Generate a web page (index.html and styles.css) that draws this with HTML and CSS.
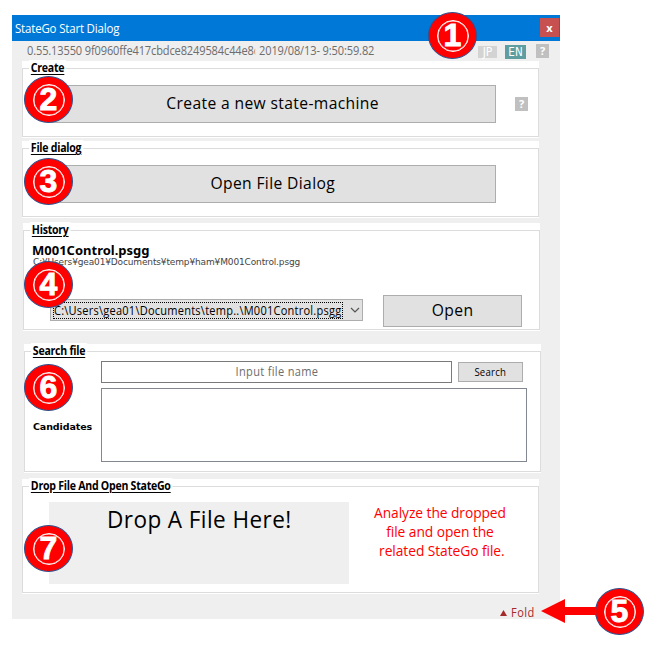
FILE: index.html
```
<!DOCTYPE html>
<html lang="en">
<head>
<meta charset="utf-8">
<title>StateGo Start Dialog</title>
<link rel="stylesheet" href="styles.css">
</head>
<body>
<main class="window">
  <header class="titlebar"><h1 class="title narrow-left">StateGo Start Dialog</h1><button class="close">x</button></header>
  <div class="meta">
    <span class="version narrow-left">0.55.13550 9f0960ffe417cbdce8249584c44e8c</span>
    <span class="date narrow-left">2019/08/13- 9:50:59.82</span>
    <span class="lang jp">JP</span><span class="lang en">EN</span><span class="help">?</span>
  </div>
  <section class="panel create">
    <div class="frame"><h2 class="legend narrow-left">Create</h2>
      <div class="row"><button class="btn big"><span class="narrow">Create a new state-machine</span></button><span class="help">?</span></div>
    </div>
  </section>
  <section class="panel file">
    <div class="frame"><h2 class="legend narrow-left">File dialog</h2>
      <div class="row"><button class="btn big"><span class="narrow">Open File Dialog</span></button></div>
    </div>
  </section>
  <section class="panel history">
    <div class="frame"><h2 class="legend narrow-left">History</h2>
      <div class="recent">M001Control.psgg</div>
      <div class="path">C:¥Users¥gea01¥Documents¥temp¥ham¥M001Control.psgg</div>
      <div class="pick">
        <div class="combo"><div class="combo-text"><span class="narrow-left">C:\Users\gea01\Documents\temp..\M001Control.psgg</span></div>
          <svg class="chevron" width="10" height="6" viewBox="0 0 10 6"><path d="M1 1l4 4 4-4" fill="none" stroke="#555" stroke-width="1.2"/></svg></div>
        <button class="btn open"><span class="narrow">Open</span></button>
      </div>
    </div>
  </section>
  <section class="panel search">
    <div class="frame"><h2 class="legend narrow-left">Search file</h2>
      <div class="search-row"><div class="input"><span class="narrow">Input file name</span></div><button class="btn find"><span class="narrow">Search</span></button></div>
      <div class="list-row"><span class="cand">Candidates</span><div class="list"></div></div>
    </div>
  </section>
  <section class="panel drop">
    <div class="frame"><h2 class="legend narrow-left">Drop File And Open StateGo</h2>
      <div class="drop-row"><div class="dropzone"><span class="narrow">Drop A File Here!</span></div>
        <p class="note narrow">Analyze the dropped<br>file and open the<br><span class="last">related StateGo file.</span></p></div>
    </div>
  </section>
  <footer class="fold"><svg width="7" height="6" viewBox="0 0 7 6"><path d="M3.5 0L7 6H0z" fill="#a52a2a"/></svg><span class="narrow-left">Fold</span></footer>
</main>
<svg class="arrow" width="58" height="24" viewBox="0 0 58 24"><path d="M0 12L24 0V8H58V16H24V24z" fill="#f00"/></svg>
<div class="badge b1"><span class="ring">1</span></div>
<div class="badge b2"><span class="ring">2</span></div>
<div class="badge b3"><span class="ring">3</span></div>
<div class="badge b4"><span class="ring">4</span></div>
<div class="badge b5"><span class="ring">5</span></div>
<div class="badge b6"><span class="ring">6</span></div>
<div class="badge b7"><span class="ring">7</span></div>
</body>
</html>
```
FILE: styles.css
```
* { box-sizing: border-box; }
body { margin: 0; padding: 15px 0 0 12px; height: 647px; overflow: hidden; position: relative; background: #fff; color: #000; font-family: "Open Sans", sans-serif; }
h1, h2, p { margin: 0; font-weight: normal; }
button { padding: 0; font-family: inherit; border: 0; border-radius: 0; color: #000; }
.narrow, .narrow-left { display: inline-block; transform: scaleX(.92); }
.narrow-left { transform-origin: 0 0; }
.window { width: 548px; height: 604px; background: #efefef; display: flex; flex-direction: column; }
.titlebar { height: 26px; flex: none; background: #0078d7; display: flex; justify-content: space-between; padding: 3px 1px 0 3px; }
.title { color: #fff; font-size: 12.5px; line-height: 21px; letter-spacing: -.2px; white-space: nowrap; }
.close { width: 19px; height: 19px; background: #c75050; color: #fff; font-size: 11px; line-height: 17px; font-weight: bold; }
.meta { height: 20px; flex: none; display: flex; padding-left: 15px; color: #6d6d6d; font-size: 12px; line-height: 19px; white-space: nowrap; }
.version { width: 248px; overflow: hidden; letter-spacing: -.14px; margin-right: -16px; }
.date { width: 219px; letter-spacing: -.13px; }
.lang { color: #fff; font-family: "DejaVu Sans Condensed", "DejaVu Sans", sans-serif; text-align: center; flex: none; }
.jp { width: 19px; height: 12px; margin-top: 5px; background: #d3d3d3; font-size: 12px; line-height: 12px; }
.en { width: 21px; height: 14px; margin: 4px 0 0 8px; background: #5f9ea0; font-size: 11.5px; line-height: 14px; }
.help { width: 13px; height: 14px; background: #c0c0c0; color: #fff; font-size: 11px; line-height: 14px; font-weight: bold; text-align: center; flex: none; }
.meta .help { margin: 3px 0 0 10px; }
.panel { flex: none; width: 517px; margin-left: 10px; background: #fff; padding: 7px 0 1px; }
.create { height: 77px; }
.file { height: 77px; margin-top: 3px; }
.history { height: 108px; margin: 5px 0 0 11px; }
.search { height: 129px; margin: 13px 0 0 12px; }
.drop { height: 115px; margin-top: 6px; }
.frame { height: 100%; border: 1px solid #dcdcdc; }
.legend { display: block; width: max-content; height: 16px; margin: -9px 0 0 6px; padding: 0 2px; background: #fff; font-size: 11.5px; line-height: 16px; font-weight: bold; letter-spacing: -.28px; text-decoration: underline; text-decoration-thickness: 1px; text-underline-offset: 2px; white-space: nowrap; }
.btn { border: 1px solid #adadad; background: #e1e1e1; }
.row { display: flex; align-items: center; padding: 9px 0 0 27px; }
.big { width: 446px; height: 38px; font-size: 17px; line-height: 22px; letter-spacing: .4px; padding-bottom: 2px; }
.row .help { margin-left: 19px; }
.recent { margin: 3px 0 0 8px; font: bold 13px/18px "Noto Sans", sans-serif; white-space: nowrap; }
.path { margin: -3px 0 0 9px; font: 9px/12px "DejaVu Sans", sans-serif; letter-spacing: -.14px; color: #444; white-space: nowrap; }
.pick { display: flex; align-items: center; padding: 27px 0 0 26px; }
.combo { width: 313px; height: 22px; margin-bottom: 2px; border: 1px solid #adadad; background: #e1e1e1; display: flex; align-items: center; padding-left: 2px; flex: none; }
.combo-text { width: 290px; flex: none; height: 17px; border: 1px dotted #000; font-size: 12px; line-height: 15px; letter-spacing: .25px; white-space: nowrap; }
.chevron { margin-left: 7px; flex: none; }
.open { width: 139px; height: 32px; margin-left: 20px; font-size: 17px; line-height: 22px; letter-spacing: .4px; padding-bottom: 2px; }
.search-row { display: flex; align-items: center; padding: 2px 0 0 76px; }
.input { width: 351px; height: 22px; border: 1px solid #7a7a7a; color: #6d6d6d; font-size: 12px; line-height: 20px; letter-spacing: .35px; text-align: center; }
.find { width: 65px; height: 20px; margin-left: 6px; font-size: 10.5px; line-height: 18px; letter-spacing: .2px; }
.list-row { display: flex; align-items: center; margin: 5px 0 0 8px; }
.cand { width: 68px; padding-top: 4px; font: bold 9.5px/12px "DejaVu Sans", sans-serif; letter-spacing: -.1px; white-space: nowrap; }
.list { width: 426px; height: 74px; border: 1px solid #828790; }
.drop-row { display: flex; padding: 8px 0 0 26px; }
.dropzone { width: 300px; height: 82px; background: #efefef; font-size: 24.5px; line-height: 34px; letter-spacing: .45px; text-align: center; }
.note { width: 182px; padding-top: 1px; color: #f00; font-size: 15px; line-height: 19px; letter-spacing: -.08px; text-align: center; white-space: nowrap; }
.last { padding-left: 4px; }
.fold { display: flex; align-items: center; gap: 4px; margin-left: 488px; padding-top: 10px; color: #a52a2a; font-size: 12px; line-height: 17px; letter-spacing: .5px; }
.badge { position: absolute; width: 49px; height: 47px; border: 1px solid #2f528f; border-radius: 50%; background: #f00; display: flex; align-items: center; justify-content: center; }
.ring { width: 32px; height: 32px; border: 1.5px solid #fff; border-radius: 50%; box-shadow: inset 0 0 0 .5px #fff; color: #fff; font: bold 32px/29px "Liberation Sans", sans-serif; -webkit-text-stroke: .9px #fff; text-align: center; }
.b1 { left: 428px; top: 12px; }
.b2 { left: 24px; top: 76px; }
.b3 { left: 24px; top: 158px; }
.b4 { left: 24px; top: 261px; }
.b5 { left: 595px; top: 588px; }
.b6 { left: 24px; top: 364px; }
.b7 { left: 24px; top: 525px; }
.arrow { position: absolute; left: 541px; top: 599px; }
```
